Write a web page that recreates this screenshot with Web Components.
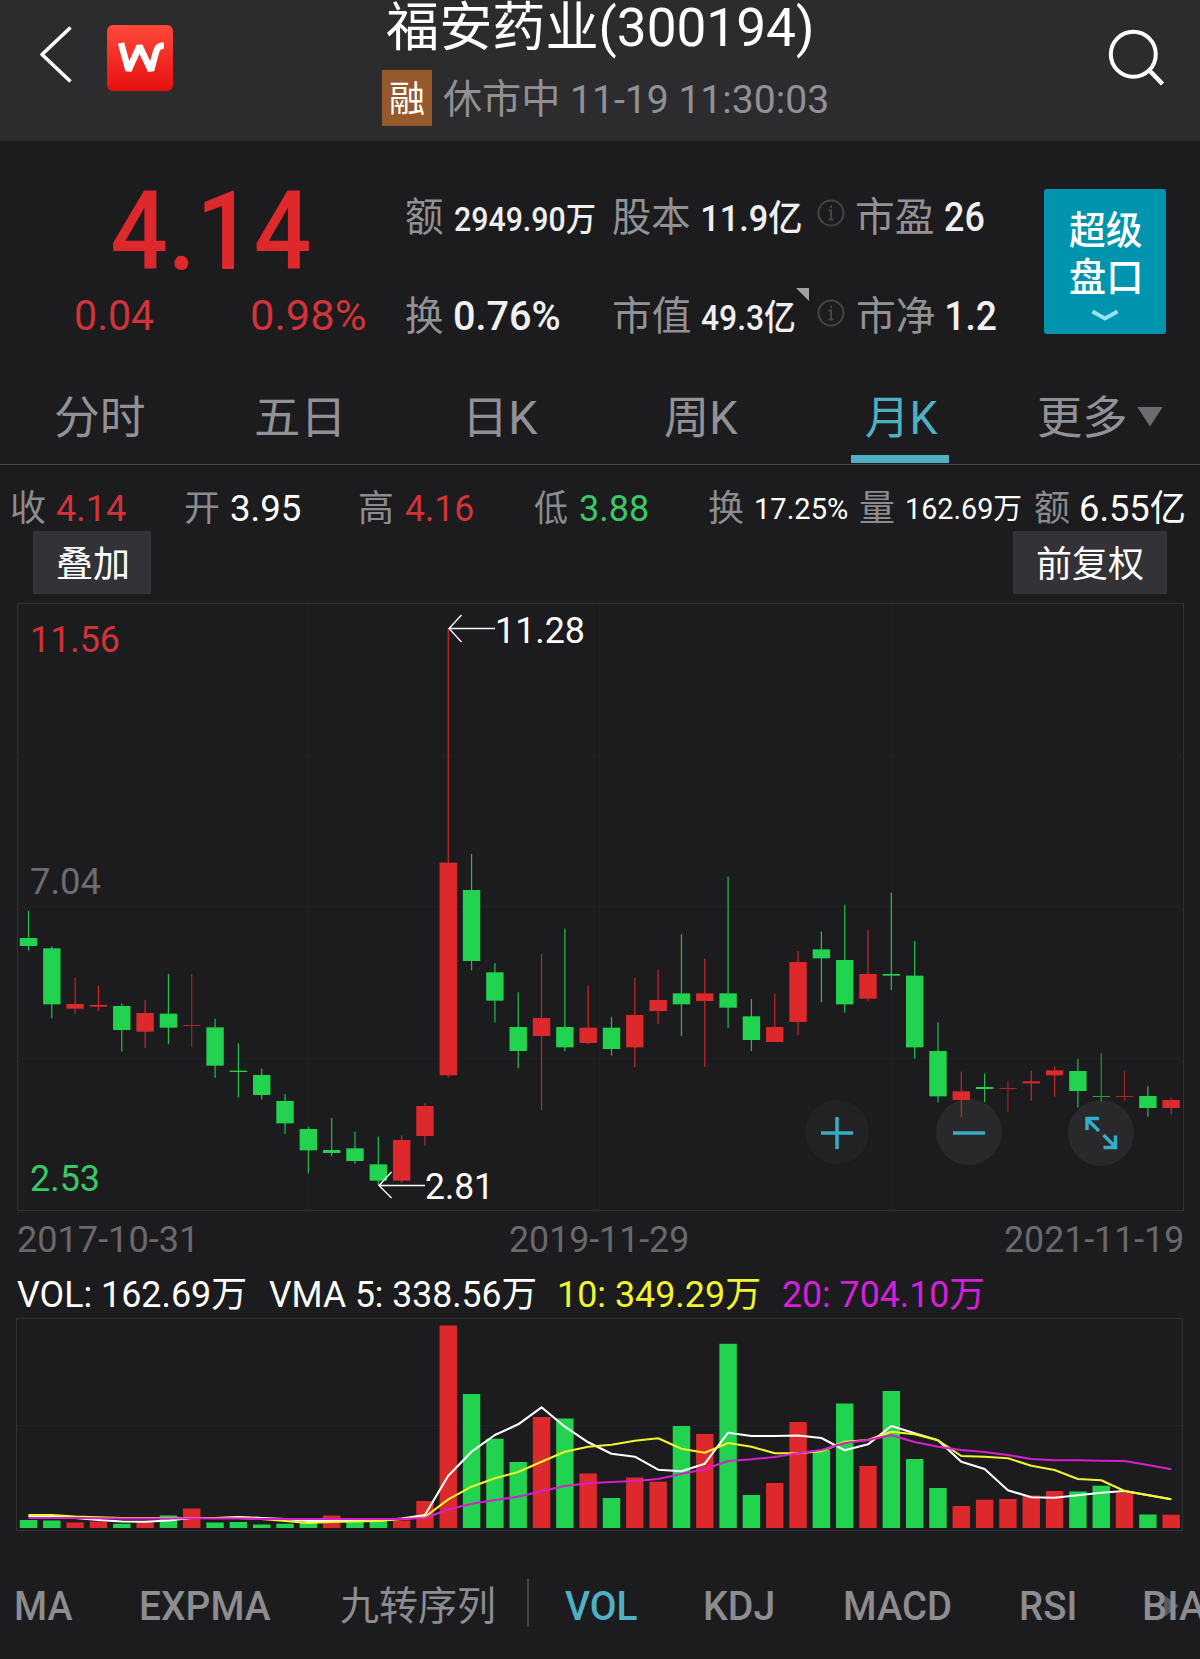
<!DOCTYPE html>
<html lang="zh-CN">
<head>
<meta charset="utf-8">
<title>福安药业(300194)</title>
<style>
  body {
    margin: 0;
    background: #1c1c1e;
    color: #fff;
    font-family: Roboto, "Noto Sans CJK SC", sans-serif;
    overflow: hidden;
  }
</style>
</head>
<body>
<stock-page></stock-page>

<script>
const RED = '#dd282c';
const GREEN = '#22d350';
const FONT = 'Roboto, "Noto Sans CJK SC", sans-serif';
const ctx = document.createElement('canvas').getContext('2d');

// One line of text, stretched so that its ink is exactly `width` wide.
class FitText extends HTMLElement {
  constructor() {
    super();
    this.attachShadow({ mode: 'open' });
  }
  connectedCallback() {
    const size = Number(this.getAttribute('size') || 36);
    const width = Number(this.getAttribute('width'));
    const gap = Number(this.getAttribute('gap') || 0);
    const weight = this.getAttribute('weight') || 400;
    ctx.font = `${weight} ${size}px ${FONT}`;
    const m = ctx.measureText(this.textContent);
    const scale = width / (m.actualBoundingBoxLeft + m.actualBoundingBoxRight);
    this.shadowRoot.innerHTML = `
      <style>
        :host {
          display: block;
          flex: none;
          width: ${width}px;
          margin-left: ${gap}px;
          font-size: ${size}px;
          font-weight: ${weight};
          line-height: 1.2;
          white-space: nowrap;
          color: ${this.getAttribute('color') || 'inherit'};
        }
        span {
          display: inline-block;
          width: max-content;
          margin-right: -200px;
          transform-origin: 0 50%;
          transform: translateX(${m.actualBoundingBoxLeft * scale}px) scaleX(${scale});
        }
      </style>
      <span><slot></slot></span>
    `;
  }
}
customElements.define('fit-text', FitText);

class InfoIcon extends HTMLElement {
  constructor() {
    super();
    this.attachShadow({ mode: 'open' });
    this.shadowRoot.innerHTML = `
      <style>
        :host { display: block; flex: none; width: 28px; height: 28px; align-self: flex-start; }
        svg { display: block; }
      </style>
      <svg width="28" height="28" fill="none" stroke="#444447" stroke-width="2">
        <circle cx="14" cy="14" r="12.5"/>
        <path d="M14 6.5v2.600M11.500 11.500H14V20M11.500 20.500h5"/>
      </svg>
    `;
  }
}
customElements.define('info-icon', InfoIcon);

class AppHeader extends HTMLElement {
  constructor() {
    super();
    this.attachShadow({ mode: 'open' });
    this.shadowRoot.innerHTML = `
      <style>
        :host {
          display: grid;
          grid-template-columns: 382px 446px 1fr;
          height: 141px;
          background: #2c2c2e;
        }
        svg { display: block; }
        .left { display: flex; align-items: flex-start; padding: 25px 0 0 38px; gap: 32px; }
        .title { padding: 0 0 0 5px; height: 58px; display: flex; align-items: center; box-sizing: border-box; }
        .sub { display: flex; align-items: center; height: 56px; margin-top: 12px; color: #919195; }
        .badge {
          width: 50px; height: 56px; background: #96592c; color: #fff;
          display: flex; align-items: center; justify-content: center;
        }
        .sub fit-text { margin-top: 4px; }
        .badge fit-text { margin-top: 5px; }
        .right { display: flex; justify-content: flex-end; padding: 28px 35px 0 0; }
      </style>
      <div class="left">
        <svg width="37" height="60" fill="none" stroke="#fff" stroke-width="3.6" stroke-linejoin="round">
          <path d="M32.5 2.500L4 29.500L32.500 56.500"/>
        </svg>
        <svg width="66" height="66">
          <defs>
            <linearGradient id="g" x1="0" y1="0" x2="0" y2="1">
              <stop offset="0" stop-color="#ff4a3a"/><stop offset="1" stop-color="#e60f10"/>
            </linearGradient>
          </defs>
          <rect width="66" height="66" rx="6" fill="url(#g)"/>
          <path d="M14 18L21.500 45.500L32.500 21L44 45.500L49 27Q50.500 20.500 57 20.500" fill="none" stroke="#fff" stroke-width="6.500" stroke-linejoin="bevel"/>
        </svg>
      </div>
      <div>
        <div class="title"><fit-text size="53" width="424">福安药业(300194)</fit-text></div>
        <div class="sub">
          <div class="badge"><fit-text size="36" width="34">融</fit-text></div>
          <fit-text size="39.500" width="384" gap="11">休市中 11-19 11:30:03</fit-text>
        </div>
      </div>
      <div class="right">
        <svg width="58" height="60" fill="none" stroke="#fff" stroke-width="4">
          <circle cx="26.300" cy="26.200" r="22.500"/>
          <path d="M42 42L55.500 56" stroke-width="4.500"/>
        </svg>
      </div>
    `;
  }
}
customElements.define('app-header', AppHeader);

class QuotePanel extends HTMLElement {
  constructor() {
    super();
    this.attachShadow({ mode: 'open' });
    this.shadowRoot.innerHTML = `
      <style>
        :host { display: flex; height: 228px; color: #f0f0f2; }
        .price { width: 406px; color: ${RED}; }
        .last { padding: 25px 0 0 112px; }
        .change { display: flex; padding-left: 76px; margin-top: -8px; color: #d23338; }
        .fields { width: 638px; }
        .row { display: flex; align-items: baseline; height: 49px; }
        .row:first-child { margin: 52px 0 50px; }
        .l { color: #929296; }
        info-icon { margin: 6px 0 0 16px; }
        .tri {
          flex: none; align-self: flex-start; width: 13px; height: 13px; margin: -4px 0 0 1px;
          background: #a2a2a5; clip-path: polygon(0 0, 100% 0, 100% 100%);
        }
        .tri + info-icon { margin: 7px 0 0 8px; }
        .book {
          display: flex; flex-direction: column; align-items: center; box-sizing: border-box;
          width: 122px; height: 145px; margin-top: 48px; padding-top: 19px;
          background: #0094ae; border-radius: 3px; color: #fff;
        }
        .book fit-text + fit-text { margin-top: 1px; }
        .book svg { margin-top: 8px; }
      </style>
      <div class="price">
        <div class="last"><fit-text size="110" weight="500" width="197">4.14</fit-text></div>
        <div class="change">
          <fit-text size="43" width="78">0.04</fit-text>
          <fit-text size="43" width="113" gap="98">0.98%</fit-text>
        </div>
      </div>
      <div class="fields">
        <div class="row">
          <fit-text class="l" size="39.500" width="37" gap="0">额</fit-text>
          <fit-text size="33" weight="500" width="140" gap="12">2949.90万</fit-text>
          <fit-text class="l" size="39.500" width="77" gap="18">股本</fit-text>
          <fit-text size="36.500" weight="500" width="98" gap="13">11.9亿</fit-text>
          <info-icon></info-icon>
          <fit-text class="l" size="39.500" width="76" gap="12">市盈</fit-text>
          <fit-text size="40.500" weight="500" width="39" gap="12">26</fit-text>
        </div>
        <div class="row">
          <fit-text class="l" size="39.500" width="37">换</fit-text>
          <fit-text size="40.500" weight="500" width="105" gap="12">0.76%</fit-text>
          <fit-text class="l" size="39.500" width="76" gap="54">市值</fit-text>
          <fit-text size="35" weight="500" width="94" gap="11">49.3亿</fit-text>
          <div class="tri"></div>
          <info-icon></info-icon>
          <fit-text class="l" size="39.500" width="76" gap="13">市净</fit-text>
          <fit-text size="40.500" weight="500" width="49" gap="13">1.2</fit-text>
        </div>
      </div>
      <div class="book">
        <fit-text size="38.500" weight="500" width="73">超级</fit-text>
        <fit-text size="38.500" weight="500" width="70">盘口</fit-text>
        <svg width="28" height="14" fill="none" stroke="#93e4f6" stroke-width="4">
          <path d="M1.500 2.500L14 9.500L26.500 2.500"/>
        </svg>
      </div>
    `;
  }
}
customElements.define('quote-panel', QuotePanel);

class PeriodTabs extends HTMLElement {
  constructor() {
    super();
    this.attachShadow({ mode: 'open' });
    this.shadowRoot.innerHTML = `
      <style>
        :host {
          display: flex; align-items: center; box-sizing: border-box; height: 96px;
          padding: 5px 0 0 56px; color: #929296; border-bottom: 1.500px solid #48484b;
        }
        .active { position: relative; margin-left: 128px; color: #4fb0c4; }
        .active::after {
          content: ""; position: absolute; left: -15px; bottom: -17px;
          width: 98px; height: 8px; background: #4fb0c4;
        }
        .more { width: 26px; height: 20px; margin: -5px 0 0 12px; background: #6c6c70; clip-path: polygon(0 0, 100% 0, 50% 100%); }
      </style>
      <fit-text size="45.500" width="88">分时</fit-text>
      <fit-text size="45.500" width="83" gap="112">五日</fit-text>
      <fit-text size="45.500" width="68" gap="131">日K</fit-text>
      <fit-text size="45.500" width="73" gap="127">周K</fit-text>
      <div class="active"><fit-text size="45.500" width="72">月K</fit-text></div>
      <fit-text size="45.500" width="86" gap="101">更多</fit-text>
      <div class="more"></div>
    `;
  }
}
customElements.define('period-tabs', PeriodTabs);

class OhlcBar extends HTMLElement {
  constructor() {
    super();
    this.attachShadow({ mode: 'open' });
    this.shadowRoot.innerHTML = `
      <style>
        :host { display: block; height: 138px; }
        .row { display: flex; align-items: center; height: 66px; padding: 23px 0 0 12px; box-sizing: border-box; }
        .l { color: #8c8c90; }
        .buttons { display: flex; justify-content: space-between; padding: 0 33px; }
        .buttons div {
          display: flex; align-items: center; justify-content: center; box-sizing: border-box;
          width: 118px; height: 63px; padding-top: 7px; background: #333337;
        }
        .buttons div:last-child { width: 154px; }
      </style>
      <div class="row">
        <fit-text class="l" size="36" width="33">收</fit-text>
        <fit-text size="36" width="70" gap="11" color="#d23338">4.14</fit-text>
        <fit-text class="l" size="36" width="34" gap="59">开</fit-text>
        <fit-text size="36" width="69" gap="12">3.95</fit-text>
        <fit-text class="l" size="36" width="32" gap="60">高</fit-text>
        <fit-text size="36" width="68" gap="13" color="#d23338">4.16</fit-text>
        <fit-text class="l" size="36" width="33" gap="61">低</fit-text>
        <fit-text size="36" width="68" gap="13" color="#39c964">3.88</fit-text>
        <fit-text class="l" size="36" width="34" gap="61">换</fit-text>
        <fit-text size="29" width="91" gap="13">17.25%</fit-text>
        <fit-text class="l" size="36" width="34" gap="13">量</fit-text>
        <fit-text size="29" width="114" gap="13">162.69万</fit-text>
        <fit-text class="l" size="36" width="34" gap="14">额</fit-text>
        <fit-text size="36" width="103" gap="12">6.55亿</fit-text>
      </div>
      <div class="buttons">
        <div><fit-text size="36" width="69">叠加</fit-text></div>
        <div><fit-text size="36" width="106">前复权</fit-text></div>
      </div>
    `;
  }
}
customElements.define('ohlc-bar', OhlcBar);

const STEP = 23.32;
const FIRST = 28.5;

// high, body top, body bottom, low; thirds of a pixel below y = 840
const CANDLES = [
  'g 212 294 318 332', 'g 319 325 493 535', 'r 413 492 506 521', 'r 437 495 500 513', 'g 490 498 570 635',
  'r 480 519 575 624', 'g 402 521 563 612', 'r 402 555 558 622', 'g 536 562 677 713', 'g 610 692 696 773',
  'g 686 705 765 779', 'g 762 783 850 881', 'g 860 867 931 1000', 'g 834 930 939 949', 'g 875 925 963 971',
  'g 890 973 1022 1035', 'r 886 900 1022 1028', 'r 790 798 888 917', 'r -634 68 706 712', 'g 42 150 363 391',
  'g 369 397 482 547', 'g 457 561 633 685', 'r 341 534 588 810', 'g 266 561 622 634', 'r 437 563 609 613',
  'g 531 563 627 647', 'r 413 525 622 682', 'r 389 480 513 552', 'g 283 460 493 588', 'r 356 460 483 680',
  'g 110 460 503 564', 'g 477 529 600 633', 'r 461 561 606 606', 'r 333 366 546 585', 'g 275 328 355 487',
  'g 195 360 493 518', 'r 270 402 476 484', 'g 158 402 407 450', 'g 303 407 622 656', 'g 547 633 769 787',
  'r 695 754 780 832', 'g 700 741 747 786', 'r 722 744 747 817', 'r 692 724 730 782', 'r 679 691 706 770',
  'g 657 693 753 802', 'g 640 768 771 785', 'r 692 768 771 782', 'g 739 768 804 830', 'r 775 780 804 823'
];

class KlineChart extends HTMLElement {
  constructor() {
    super();
    this.attachShadow({ mode: 'open' });
    const candles = CANDLES.map((row, i) => {
      const [c, ...v] = row.split(' ');
      const [high, top, bottom, low] = v.map(n => 840 + n / 3);
      const x = FIRST + i * STEP;
      const color = c === 'r' ? RED : GREEN;
      const thin = bottom - top < 1.2 ? ' opacity="0.75"' : '';
      return `<g fill="${color}"${thin}>
        <rect x="${x - 0.6}" y="${high}" width="1.2" height="${low - high}" opacity="0.9"/>
        <rect x="${x - 8.7}" y="${top}" width="17.4" height="${bottom - top}"/></g>`;
    }).join('');
    this.shadowRoot.innerHTML = `
      <style>
        :host { display: block; height: 609px; }
        svg { display: block; }
        text { font: 36px ${FONT}; }
      </style>
      <svg width="1200" height="609" viewBox="0 603 1200 609">
        <rect x="17.500" y="603.500" width="1166" height="607" fill="none" stroke="#323236"/>
        <path d="M17 755.500H1184M17 906.500H1184M17 1058.500H1184M308.500 604V1210M599.500 604V1210M891.500 604V1210" stroke="#202022" fill="none"/>
        <g fill="#29292c">
          <circle cx="837" cy="1132" r="32" fill="#222225"/>
          <circle cx="969" cy="1132" r="33"/>
          <circle cx="1101" cy="1133" r="33"/>
        </g>
        ${candles}
        <g fill="none" stroke="#35adc4" stroke-width="3.500">
          <path d="M821 1133H853M837 1117V1149"/>
          <path d="M953 1133H985"/>
          <path d="M1099 1131L1087 1119M1087 1130V1118.500H1099M1103.500 1135L1115.500 1147M1115.500 1135.500V1147.500H1103.500"/>
        </g>
        <g fill="none" stroke="#fff" stroke-width="1.300">
          <path d="M495 628.500H449M461.500 615L449 628.500L461.500 642"/>
          <path d="M425 1185.500H379M391.500 1172L379 1185.500L391.500 1198"/>
        </g>
        <text x="30" y="651.500" textLength="90" lengthAdjust="spacingAndGlyphs" fill="#d23338">11.56</text>
        <text x="30" y="894" textLength="71" lengthAdjust="spacingAndGlyphs" fill="#6c6c70">7.04</text>
        <text x="30" y="1191" textLength="70" lengthAdjust="spacingAndGlyphs" fill="#39c964">2.53</text>
        <text x="495" y="643" textLength="90" lengthAdjust="spacingAndGlyphs" fill="#fff">11.28</text>
        <text x="425" y="1199" textLength="69" lengthAdjust="spacingAndGlyphs" fill="#fff">2.81</text>
      </svg>
    `;
  }
}
customElements.define('kline-chart', KlineChart);

const VOLUMES = [
  'g1520', 'g1520.5', 'r1522.5', 'r1521.5', 'g1523.7', 'r1522', 'g1515.5', 'r1508.5', 'g1522.5', 'g1522',
  'g1524.5', 'g1523.7', 'g1522', 'r1515.5', 'g1521.7', 'g1521', 'r1520.5', 'r1501', 'r1325.5', 'g1394',
  'g1438.7', 'g1462', 'r1417', 'g1418.5', 'r1473.5', 'g1498', 'r1477.5', 'r1481.7', 'g1426', 'r1434',
  'g1343.8', 'g1495', 'r1483', 'r1422', 'g1450', 'g1403.5', 'r1466', 'g1391', 'g1459', 'g1488',
  'r1506', 'r1499.7', 'r1499', 'r1495.5', 'r1491', 'g1491.5', 'g1485.7', 'r1492.7', 'g1514.5', 'r1514.7'
];
const MA5 = [1516, 1516, 1518, 1520, 1521.5, 1521.7, 1520.5, 1518, 1518, 1517, 1518, 1519, 1521, 1521, 1521, 1520.5, 1518.5, 1515,
  1475.7, 1451.7, 1435, 1424.3, 1407.3, 1426.7, 1442.3, 1453.7, 1456.7, 1469.7, 1471.3, 1463.7, 1432.7, 1436, 1436, 1435.5,
  1438, 1450.3, 1444.3, 1426, 1433.3, 1440.3, 1461.7, 1469, 1490.3, 1497.3, 1497.7, 1495.3, 1492.7, 1491, 1495, 1499.3];
const MA10 = [1515, 1515, 1516.5, 1517.3, 1518, 1518, 1518, 1518, 1518, 1518, 1519, 1521, 1523, 1522, 1521.5, 1521, 1519, 1517,
  1499.3, 1486.7, 1478.3, 1472, 1461.7, 1451.7, 1446.7, 1444.7, 1440.7, 1438.3, 1448.7, 1452.7, 1443, 1446.7, 1453.3, 1453.3,
  1451.3, 1441.7, 1440, 1431.7, 1434.3, 1440.3, 1456, 1456.7, 1458.3, 1465.7, 1470, 1479, 1480.3, 1491, 1495.3, 1499.3];
const MA20 = [1518, 1518, 1518, 1518.3, 1518.5, 1518.5, 1518.5, 1518.3, 1518.5, 1518.5, 1519, 1519, 1519, 1519, 1519, 1519, 1519, 1518,
  1509.5, 1503.7, 1500, 1496.7, 1491.3, 1486, 1483.3, 1482, 1481, 1479, 1474, 1469.3, 1461, 1459.3, 1457, 1453.3,
  1450, 1443, 1440, 1435.3, 1442, 1446.7, 1450, 1452, 1455, 1459, 1460.3, 1460.3, 1460.7, 1461, 1465, 1469.3];

class VolumeChart extends HTMLElement {
  constructor() {
    super();
    this.attachShadow({ mode: 'open' });
    const bars = VOLUMES.map((v, i) => {
      const y = Number(v.slice(1));
      return `<rect x="${FIRST + i * STEP - 8.7}" y="${y}" width="17.4" height="${1528 - y}" fill="${v[0] === 'r' ? RED : GREEN}"/>`;
    }).join('');
    const line = (data, color) =>
      `<polyline points="${data.map((y, i) => `${FIRST + i * STEP},${y}`).join(' ')}" stroke="${color}"/>`;
    this.shadowRoot.innerHTML = `
      <style>
        :host { display: block; }
        svg { display: block; }
        .dates, .legend { display: flex; align-items: center; box-sizing: border-box; }
        .dates { height: 54px; padding: 4px 18px 0; justify-content: space-between; color: #69696d; }
        .legend { height: 52px; padding: 7px 17px 0; }
      </style>
      <div class="dates">
        <fit-text width="174">2017-10-31</fit-text>
        <fit-text width="177">2019-11-29</fit-text>
        <fit-text width="177">2021-11-19</fit-text>
      </div>
      <div class="legend">
        <fit-text width="228">VOL: 162.69万</fit-text>
        <fit-text width="266" gap="24">VMA 5: 338.56万</fit-text>
        <fit-text width="199" gap="25" color="#f1f52d">10: 349.29万</fit-text>
        <fit-text width="200" gap="24" color="#d81fd8">20: 704.10万</fit-text>
      </div>
      <svg width="1200" height="214" viewBox="0 1318 1200 214">
        <path d="M16.500 1318.500H1182.500V1530.500H16.500Z" fill="none" stroke="#323236"/>
        <path d="M17 1425.500H1182" stroke="#222225"/>
        ${bars}
        <g fill="none" stroke-width="2.100" stroke-linejoin="round">
          ${line(MA5, '#fff')}
          ${line(MA10, '#f1f52d')}
          ${line(MA20, '#d81fd0')}
        </g>
      </svg>
    `;
  }
}
customElements.define('volume-chart', VolumeChart);

class IndicatorTabs extends HTMLElement {
  constructor() {
    super();
    this.attachShadow({ mode: 'open' });
    this.shadowRoot.innerHTML = `
      <style>
        :host {
          display: flex; align-items: center; height: 127px; padding: 0 0 0 16px;
          box-sizing: border-box; overflow: hidden; color: #8c8c91;
        }
        i { flex: none; width: 2px; height: 48px; margin: 14px 36px 0 34px; background: #454548; }
        .bias { display: flex; align-items: center; position: relative; margin-left: 69px; }
        svg { position: absolute; left: 20px; top: 34px; }
        fit-text { margin-top: 22px; }
        .bias fit-text { position: relative; }
      </style>
      <fit-text size="40" weight="500" width="57">MA</fit-text>
      <fit-text size="40" weight="500" width="130" gap="68">EXPMA</fit-text>
      <fit-text size="40" width="152" gap="70">九转序列</fit-text>
      <i></i>
      <fit-text size="40" weight="500" width="72" color="#4fb0c4">VOL</fit-text>
      <fit-text size="40" weight="500" width="68" gap="68">KDJ</fit-text>
      <fit-text size="40" weight="500" width="106" gap="72">MACD</fit-text>
      <fit-text size="40" weight="500" width="54" gap="70">RSI</fit-text>
      <div class="bias">
        <svg width="15" height="22"><path d="M0 0L15 11L0 22Z" fill="#58585b"/></svg>
        <fit-text size="40" weight="500" width="62">BIA</fit-text>
      </div>
    `;
  }
}
customElements.define('indicator-tabs', IndicatorTabs);

class StockPage extends HTMLElement {
  constructor() {
    super();
    this.attachShadow({ mode: 'open' });
    this.shadowRoot.innerHTML = `
      <style>
        :host { display: flex; flex-direction: column; width: 1200px; height: 1659px; overflow: hidden; }
      </style>
      <app-header></app-header>
      <quote-panel></quote-panel>
      <period-tabs></period-tabs>
      <ohlc-bar></ohlc-bar>
      <kline-chart></kline-chart>
      <volume-chart></volume-chart>
      <indicator-tabs></indicator-tabs>
    `;
  }
}
customElements.define('stock-page', StockPage);
</script>
</body>
</html>
